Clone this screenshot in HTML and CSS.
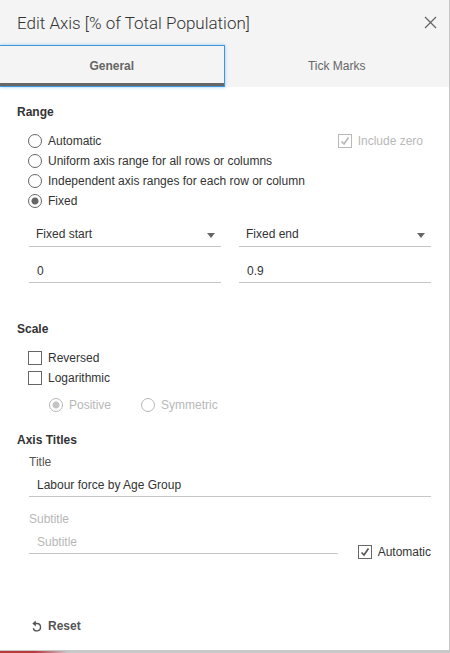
FILE: index.html
```
<!DOCTYPE html>
<html lang="en">
<head>
  <meta charset="UTF-8">
  <meta name="viewport" content="width=device-width, initial-scale=1.0">
  <title>Edit Axis</title>
  <link rel="stylesheet" href="styles.css">
</head>
<body>
  <div class="dialog">
    <header class="header">
      <h1>Edit Axis [% of Total Population]</h1>
      <button type="button" class="close" aria-label="Close">
        <svg width="13" height="13" viewBox="0 0 13 13"><path d="M1 1 L12 12 M12 1 L1 12" fill="none" stroke="#666" stroke-width="1.3"/></svg>
      </button>
    </header>

    <div class="tabs" role="tablist">
      <button type="button" class="tab active" role="tab" aria-selected="true">General</button>
      <button type="button" class="tab" role="tab" aria-selected="false">Tick Marks</button>
    </div>

    <form class="content">
      <h2>Range</h2>
      <div class="options">
        <div class="option-row">
          <label class="option"><input type="radio" name="range">Automatic</label>
          <label class="option disabled zero"><input type="checkbox" checked disabled>Include zero</label>
        </div>
        <label class="option"><input type="radio" name="range">Uniform axis range for all rows or columns</label>
        <label class="option"><input type="radio" name="range">Independent axis ranges for each row or column</label>
        <label class="option"><input type="radio" name="range" checked>Fixed</label>
      </div>

      <div class="range-fields">
        <select class="field select" aria-label="Range start type">
          <option>Fixed start</option>
          <option>Automatic</option>
        </select>
        <select class="field select" aria-label="Range end type">
          <option>Fixed end</option>
          <option>Automatic</option>
        </select>
        <input class="field" type="text" value="0" aria-label="Fixed start">
        <input class="field" type="text" value="0.9" aria-label="Fixed end">
      </div>

      <h2 class="scale-heading">Scale</h2>
      <div class="options">
        <label class="option"><input type="checkbox">Reversed</label>
        <label class="option"><input type="checkbox">Logarithmic</label>
      </div>
      <div class="log-options">
        <label class="option disabled"><input type="radio" name="log" checked disabled>Positive</label>
        <label class="option disabled"><input type="radio" name="log" disabled>Symmetric</label>
      </div>

      <h2 class="titles-heading">Axis Titles</h2>
      <div class="titles">
        <div class="title-field">
          <label for="title">Title</label>
          <input class="field" type="text" id="title" value="Labour force by Age Group">
        </div>
        <div class="subtitle-row">
          <div class="title-field subtitle">
            <label for="subtitle">Subtitle</label>
            <input class="field" type="text" id="subtitle" placeholder="Subtitle" disabled>
          </div>
          <label class="option"><input type="checkbox" checked>Automatic</label>
        </div>
      </div>

      <button type="reset" class="reset">
        <svg width="10" height="12" viewBox="0 0 10 12"><path d="M2 3.5 H5 A3.7 3.7 0 1 1 1.3 8.2" fill="none" stroke="#555" stroke-width="1.3"/><path d="M0.3 3.5 L3.8 0.5 V6.5 Z" fill="#555"/></svg>
        Reset
      </button>
    </form>
  </div>
  <div class="edge"></div>
</body>
</html>
```

FILE: styles.css
```
* {
  box-sizing: border-box;
}
body {
  margin: 0;
  font-family: "Liberation Sans", Arial, sans-serif;
  font-size: 12px;
  line-height: 20px;
  color: #333;
  background: #fff;
}
button, input, select {
  font: inherit;
  color: inherit;
}
button {
  padding: 0;
  border: 0;
  background: none;
  cursor: pointer;
}
.dialog {
  border-right: 1px solid #c8c8c8;
}

/* Header and tabs */
.header {
  display: flex;
  justify-content: space-between;
  align-items: center;
  height: 45px;
  padding: 0 12px 0 17px;
  background: #f4f4f4;
}
h1 {
  margin: 0;
  font-family: Roboto, sans-serif;
  font-size: 17px;
  font-weight: 300;
}
.close {
  display: flex;
}
.tabs {
  display: grid;
  grid-template-columns: 1fr 1fr;
  height: 42px;
  background: #f4f4f4;
}
.tab {
  color: #666;
}
.tab.active {
  font-weight: bold;
  border: 1px solid #3f97d9;
  border-left: 0;
  box-shadow: inset 0 -3px #666, 0 0 3px #8fc4ee;
}

/* Form */
.content {
  padding: 15px 18px 14px 17px;
}
h2 {
  margin: 0;
  font-size: 12px;
  line-height: 20px;
}
.options {
  margin-top: 9px;
  padding-left: 11px;
}
.option-row {
  display: flex;
  justify-content: space-between;
}
.option {
  display: flex;
  align-items: center;
  gap: 6px;
}
.zero {
  padding-right: 8px;
}
.disabled {
  color: #b8b8b8;
}
input[type="radio"],
input[type="checkbox"] {
  appearance: none;
  flex: none;
  width: 14px;
  height: 14px;
  margin: 0;
  border: 1px solid #666;
  background: #fff center no-repeat;
}
input[type="radio"] {
  border-radius: 50%;
}
input[type="radio"]:checked {
  background-image: radial-gradient(circle, #666 3px, transparent 4px);
}
input[type="checkbox"]:checked {
  background-image: url("data:image/svg+xml,%3Csvg xmlns='http://www.w3.org/2000/svg' width='12' height='12'%3E%3Cpath d='M2.5 6.5 L5 9 L9.5 2.5' fill='none' stroke='%23555' stroke-width='1.7'/%3E%3C/svg%3E");
}
input[type="radio"]:disabled,
input[type="checkbox"]:disabled {
  border-color: #b8b8b8;
}
input[type="radio"]:disabled:checked {
  background-image: radial-gradient(circle, #c4c4c4 3px, transparent 4px);
}
input[type="checkbox"]:disabled:checked {
  background-image: url("data:image/svg+xml,%3Csvg xmlns='http://www.w3.org/2000/svg' width='12' height='12'%3E%3Cpath d='M2.5 6.5 L5 9 L9.5 2.5' fill='none' stroke='%23b8b8b8' stroke-width='1.7'/%3E%3C/svg%3E");
}
.field {
  width: 100%;
  min-width: 0;
  height: 25px;
  padding: 2px 8px 0;
  border: 0;
  border-bottom: 1px solid #c6c6c6;
  border-radius: 0;
  background: transparent;
}
.field::placeholder {
  color: #b8b8b8;
  opacity: 1;
}
.select {
  appearance: none;
  padding: 0 7px;
  background: url("data:image/svg+xml,%3Csvg xmlns='http://www.w3.org/2000/svg' width='8' height='5'%3E%3Cpath d='M0 0 H8 L4 5 Z' fill='%23666'/%3E%3C/svg%3E") right 6px top 11px no-repeat;
}
.range-fields {
  display: grid;
  grid-template-columns: 1fr 1fr;
  gap: 11px 18px;
  margin-top: 11px;
  padding-left: 12px;
}
.scale-heading {
  margin-top: 36px;
}
.log-options {
  display: flex;
  gap: 30px;
  margin-top: 7px;
  padding-left: 32px;
}
.titles-heading {
  margin-top: 15px;
}
.titles {
  margin-top: 2px;
  padding-left: 12px;
}
.title-field {
  display: flex;
  flex-direction: column;
}
.title-field label {
  color: #555;
}
.subtitle-row {
  display: flex;
  align-items: flex-end;
  gap: 20px;
  margin-top: 12px;
}
.subtitle {
  flex: 1;
  padding-bottom: 8px;
}
.subtitle label {
  color: #b8b8b8;
}
.reset {
  display: flex;
  align-items: center;
  gap: 6px;
  margin: 54px 0 0 15px;
  font-weight: bold;
  color: #555;
}

/* Strip under the dialog */
.edge {
  height: 3px;
  border-top: 1px solid #c8c8c8;
  background: linear-gradient(to right, #b93a40 35px, #c8c8c8 68px);
}
```
